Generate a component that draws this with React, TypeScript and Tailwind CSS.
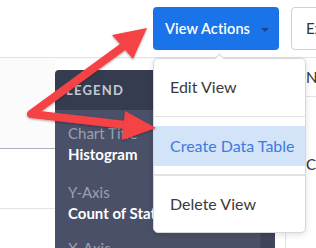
import React from "react";

export default function App() {
  return (
    <div className="relative w-[316px] h-[248px] overflow-hidden bg-white font-['Lato','Liberation_Sans',sans-serif]">
      {/* Top bar */}
      <div className="flex h-[58px] items-start gap-[12px] pl-[153px] pt-[7px] border-b border-[#e2e2e2] shadow-[0_1px_2px_rgba(0,0,0,0.04)]">
        <div className="flex h-[43px] w-[126px] shrink-0 items-center rounded-[4px] bg-[#1a73e8] pl-[12px] text-[14.5px] font-semibold tracking-[0.1px] text-white">
          <span>View Actions</span>
          <span className="ml-[11px] mt-[2px] h-0 w-0 border-x-[4px] border-t-[4px] border-x-transparent border-t-[#1d4587]" />
        </div>
        <div className="flex h-[43px] w-[90px] shrink-0 items-center rounded-[4px] border border-[#d0d0d0] bg-white pl-[14px] text-[15px] text-[#333]">
          Export
        </div>
      </div>

      {/* Content */}
      <div className="flex h-[190px]">
        {/* left strip */}
        <div className="flex w-[55px] shrink-0 flex-col bg-[#fbfbfc]">
          <div className="h-[91px] border-b border-[#aab0c0]" />
          <div className="h-[60px] bg-white border-b border-[#e4e4e4]" />
          <div className="flex-1 bg-white" />
        </div>

        {/* Legend panel */}
        <div className="mt-[12px] flex w-[220px] shrink-0 flex-col overflow-hidden rounded-tl-[4px]">
          <div className="flex h-[40px] shrink-0 items-center bg-[#363c50] pl-[11px] pt-[1px] text-[13px] font-bold tracking-[1.2px] text-[#c5c9d3]">
            LEGEND
          </div>
          <div className="flex flex-1 bg-[#4a5068]">
            <div className="flex-1 pl-[13px] pt-[13px] text-[15px] leading-[21px] border-r border-[#444a61]">
              <div className="text-[#9aa0b2]">Chart Title</div>
              <div className="font-bold text-white">Histogram</div>
              <div className="mt-[17px] text-[#9aa0b2]">Y-Axis</div>
              <div className="font-bold text-white whitespace-nowrap">Count of Status</div>
              <div className="mt-[14px] text-[#9aa0b2]">X-Axis</div>
            </div>
            <div className="w-[14px] bg-[#3f455b]" />
          </div>
        </div>

        {/* gap */}
        <div className="w-[10px] shrink-0 bg-white" />

        {/* right table */}
        <div className="flex-1 border-l border-[#e4e4e4] bg-white text-[15px] text-[#333] whitespace-nowrap overflow-hidden">
          <div className="flex h-[39px] items-center border-b border-[#e4e4e4] pl-[20px]">Name</div>
          <div className="pl-[20px] pt-[56px]">Count</div>
        </div>
      </div>

      {/* Dropdown menu */}
      <div className="absolute left-[153px] top-[58px] w-[153px] rounded-[5px] border border-[#d8d8d8] bg-white py-[8px] shadow-[0_2px_6px_rgba(0,0,0,0.12)] text-[16px] text-[#3a3a3a]">
        <div className="absolute -top-[4px] left-[62px] h-[7px] w-[7px] rotate-45 border-l border-t border-[#d8d8d8] bg-white" />
        <div className="flex h-[40px] items-center pl-[16px]">Edit View</div>
        <div className="my-[9px] h-px bg-[#e2e2e2]" />
        <div className="flex h-[40px] items-center bg-[#d3e3f8] pl-[16px] text-[#3d7be0] whitespace-nowrap">Create Data Table</div>
        <div className="my-[8px] h-[2px] bg-[#e2e2e2]" />
        <div className="flex h-[40px] items-center pl-[16px]">Delete View</div>
      </div>

      {/* Annotation arrows */}
      <svg className="absolute left-0 top-0" width="316" height="248" viewBox="0 0 316 248">
        <defs>
          <filter id="sh" x="-20%" y="-20%" width="140%" height="140%">
            <feDropShadow dx="0" dy="1" stdDeviation="1.2" floodColor="#000" floodOpacity="0.35" />
          </filter>
        </defs>
        <g filter="url(#sh)" fill="#f54245" stroke="none">
          <path d="M126,125 L31,114 L124,46" fill="none" stroke="#f54245" strokeWidth="8" strokeLinejoin="round" strokeLinecap="butt" />
          <polygon points="147,28 112,35 133,59" />
          <polygon points="156,128 125,111 122,140" />
        </g>
      </svg>
    </div>
  );
}
